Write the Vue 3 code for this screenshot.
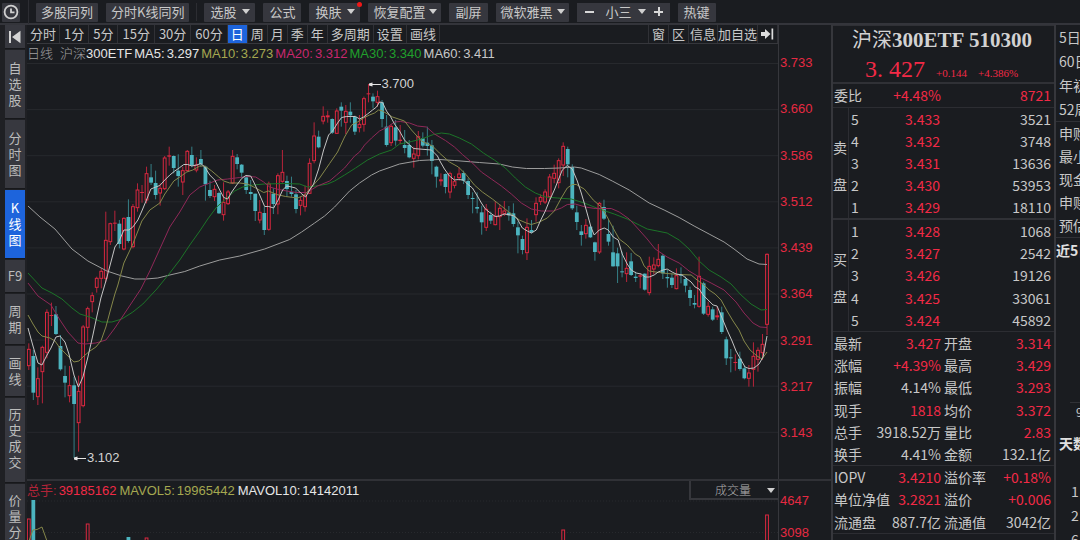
<script setup>
import { ref } from 'vue'

const sideTabs = [
  { text: '自选股', size: 'h3' },
  { text: '分时图', size: 'h3' },
  { text: 'K线图', size: 'h3', active: true },
  { text: 'F9', size: 'h1' },
  { text: '周期', size: 'h2' },
  { text: '画线', size: 'h2' },
  { text: '历史成交', size: 'h4' },
  { text: '价量分布', size: 'h4' },
]

const periods = ['分时', '1分', '5分', '15分', '30分', '60分', '日', '周', '月', '季', '年', '多周期', '设置', '画线']
const isMinute = (t) => /^\d/.test(t)

const averages = [
  { label: 'MA5:', value: '3.297', tone: 'bright' },
  { label: 'MA10:', value: '3.273', tone: 'olive' },
  { label: 'MA20:', value: '3.312', tone: 'pink' },
  { label: 'MA30:', value: '3.340', tone: 'green' },
  { label: 'MA60:', value: '3.411', tone: 'gray' },
]
const volumes = [
  { label: 'MAVOL5:', value: '19965442', tone: 'olive' },
  { label: 'MAVOL10:', value: '14142011', tone: 'bright' },
]
const priceTicks = ['3.733', '3.660', '3.586', '3.512', '3.439', '3.364', '3.291', '3.217', '3.143']
const gridY = priceTicks.map((_, i) => 63.5 + i * 46.1)

// Candles per block: [up, bodyTop, bodyBottom, wickTop, wickBottom] in thirds of a unit below `top`.
const blocks = [
  { top: 280, rows: [
    [1,208,257,190,270],[0,228,338,210,360],[1,296,350,262,375],[1,202,275,197,370],[1,97,217,88,235],[1,105,107,68,138],
    [0,103,162,78,165],[0,198,268,165,272],[0,288,308,257,352],[1,317,347,258,367],[0,316,372,290,534],[1,334,428,287,515],
    [1,141,377,135,382],[1,86,142,80,185],[1,47,65,37,97]] },
  { top: 50, rows: [
    [1,685,712,680,728],[1,664,685,655,715],[1,571,685,485,697],[1,521,575,518,585],[1,518,521,482,543],[0,521,582,510,595],
    [1,505,597,502,601],[0,501,573,448,578],[1,470,590,462,595],[1,420,473,400,485],[1,426,429,405,458],[1,371,450,350,460],
    [0,382,398,342,405],[0,399,435,362,448],[1,415,429,400,467],[1,324,416,318,420],[1,316,320,290,347],[0,318,354,316,370],
    [0,362,378,313,410],[1,362,396,350,435],[1,304,362,300,365]] },
  { top: 70, rows: [
    [0,255,287,230,292],[1,285,300,262,307],[0,267,283,240,290],[0,290,343,287,392],[0,360,378,332,384],[1,358,380,345,393],
    [0,369,430,365,432],[1,397,434,337,452],[1,366,401,360,405],[1,259,339,240,342],[0,262,282,252,298],[0,284,308,282,325],
    [0,322,360,315,372],[0,366,372,330,390],[0,371,423,371,453],[1,427,450,390,460],[0,429,480,410,495],[1,342,478,335,482],
    [0,371,402,355,432],[1,317,402,310,433],[1,307,334,240,338],[0,333,357,317,380],[0,366,372,320,380],[0,373,417,360,430],
    [1,391,406,380,436],[1,376,410,347,425],[1,280,370,265,372],[1,198,272,157,280],[0,200,232,182,235],[1,139,153,109,163],
    [1,136,142,122,158],[0,147,188,145,192],[1,123,190,115,192],[0,110,122,97,170],[1,124,157,105,192],[0,125,136,97,158],
    [0,141,185,137,195],[1,163,173,135,187],[1,86,163,80,185],[1,70,73,42,97],[0,80,94,70,115],[1,80,97,62,110],
    [0,97,147,90,172],[0,170,225,135,230],[1,169,218,163,228],[0,172,212,150,227],[1,209,213,165,222],[0,225,234,180,250],
    [0,225,262,210,265],[1,252,265,230,293],[1,200,257,183,268],[0,205,227,187,232],[0,218,228,170,257],[0,226,273,210,313],
    [0,290,320,287,353],[1,328,334,310,347],[0,312,351,310,370],[1,311,366,305,385],[1,335,346,318,355],[1,312,323,292,332],
    [0,309,332,302,342],[0,333,375,325,387],[0,384,386,367,430],[0,411,416,367,430],[0,427,457,407,494],[1,418,472,402,483],
    [0,435,452,425,462],[1,439,464,393,466],[1,415,440,403,480],[1,423,431,393,438],[0,428,436,408,452],[0,430,462,400,470],
    [0,472,496,455,550],[0,507,540,497,553],[1,472,548,445,570],[0,480,487,450,490],[1,400,434,382,455],[1,382,394,373,405],
    [1,366,396,358,402],[1,321,380,312,390],[1,310,325,284,340],[1,272,338,265,355],[1,229,285,217,318],[0,237,283,230,322],
    [0,291,415,283,420],[0,427,456,407,480]] },
  { top: 130, rows: [
    [0,304,315,285,347],[1,286,311,267,326],[0,290,322,287,324],[0,337,366,335,392],[1,220,366,216,372],[0,231,266,209,270],
    [0,312,335,270,347],[0,367,409,287,410],[0,370,409,353,459],[0,424,426,365,442],[1,415,431,367,456],[0,394,435,369,438],
    [0,440,444,425,456],[1,436,440,430,475],[0,431,479,430,482],[1,409,488,380,496],[1,405,417,382,433],[1,388,407,342,412],
    [0,377,430,372,447],[0,441,445,420,473],[0,443,465,430,474],[1,437,476,415,478],[0,434,436,412,460],[0,447,467,440,487],
    [0,480,504,470,528],[0,519,524,495,535],[1,439,529,380,533],[0,460,551,455,555],[1,529,553,515,560],[0,538,569,530,573],
    [1,556,562,530,570],[0,547,606,530,612],[0,628,685,620,705],[0,682,685,657,727],[1,696,698,673,722],[0,686,717,665,722],
    [0,715,745,707,748],[1,729,745,705,770],[1,679,718,637,770],[1,661,688,652,725],[1,643,668,612,690],[1,373,583,370,615]] },
]
const STEP = 4.535
const candleX = (i) => 28.8 + i * STEP
const candles = blocks
  .flatMap((b) => b.rows.map(([up, ...v]) => [up, ...v.map((n) => b.top + n / 3)]))
  .map(([up, a, b, hi, lo], i) => ({ up, a, b, hi, lo, x: candleX(i) }))

const lines = [
  { tone: 'l60', pts: '28,206 40,217 55,229 72,249 88,261 107,271 122,276 135,279 146,279 158,278 170,275 185,271.5 200,266 220,260 240,256 265,249 290,239.5 302,232 315,223 325,216 335,207 350,191 360,183 372,175 380,171 400,164 420,160.5 440,159.5 455,160.5 480,162.5 500,164 513,167 527,168.5 545,168.5 560,168 575,167 582,168 600,174.5 613,181 630,190 650,203 665,210 680,217.5 695,226 710,234 725,242 735,249 748,259 760,264 768,264.5' },
  { tone: 'l30', pts: '28,273 42,288 52,293 62,299 72,308 80,314 90,317 102,322 112,322 122,319 133,312 143,304 157,289 170,273 180,260 190,245 200,231 208,219 217,207 226,199 235,191 243,187 253,185 265,184 285,183.5 300,184 308,187 316,186 328,184 335,181 345,175 356,168 368,160 380,154 392,150 400,144 412,141.5 422,139 434,134.5 442,133 450,134 460,138 472,144 484,153 495,160 506,168 516,178 526,187 536,193 546,197 558,198 572,199 585,203 600,209 615,214 628,219 640,225 648,229 658,231 668,233 680,240 690,249 700,261 710,270 722,277 732,284 742,295 752,304 762,310 768,309.5' },
  { tone: 'l20', pts: '28,283 38,296 51,305 60,320 68,332 78,343 85,344 96,343 106,340 115,328 125,313 135,298 141,289 150,271 160,249 170,227 180,212 190,195 200,187 210,183 218,180 228,179 240,177.5 247,176.5 256,177 264,182 270,187 277,189 287,191 297,192.5 307,192.5 318,186 330,181 337,175 345,168 355,156 360,152 365,145 372,138 380,131 388,127 395,122 401,121.5 410,123 418,126 427,127 435,134 446,140.5 455,147 463,154.5 473,163 482,172 492,179 502,186 512,194 522,203 532,209 542,211 554,211 562,208 568,204.5 576,204 586,207 596,208.5 612,208.5 620,212 630,219 640,230 648,239 656,249 668,257 680,263 690,271 700,277 712,283 725,290 737,302 745,313 754,323 761,327 768,327.5' },
  { tone: 'l10', pts: '28,315 33,324 38,332 42,336 50,338 55,341 60,348 68,356 74,362 79,361 84,356 90,351 96,347 101,341 106,327 110,312 115,294 118,285 124,263 133,244 142,221 150,210 160,203 165,194 174,181 180,177 187,172 193,170 200,166 205,166 212,171 219,177 224,181 230,183 240,183 248,184 256,188 264,192.5 269,191 277,194.5 286,196.5 298,198 305,195 312,187 320,178 330,163.5 338,152 345,137 352,125 358,122 364,118 370,115 375,113 379,110 383,111 393,117 405,121 412,130 422,141 433,146 440,153 450,162 459,167 467,175 475,185 483,192 493,199 502,206 512,214 520,220 527,223 532,224.5 540,222 548,218 555,211 562,198 568,188 573,184.5 577,184.5 585,189 594,200 602,207 608,217 615,230 620,239 628,245 636,254 641,257 645,266 650,271 660,272.5 668,273.5 680,274.5 692,275 698,280 705,285 710,290 716,294 722,300 728,311 734,321 740,330 745,341 751,350 758,356 763,359 768,352' },
  { tone: 'l5', pts: '28,328 33,346 38,363 42,365 46,357 51,348 56,337 60,336 65,342 69,354 74,375 78.5,387 83,377 88,357 93,335 97,316 101,298 106,281 110,266 115,247 119,241.5 124,230 129,230 133,227 138,220 142,211 147,199 151,189 156,187 160,185.5 165,180 170,175 175,171 180,167.5 184,164.5 188,164.5 192,166 197,165 201,163.5 205,167 210,175 215,180 220,190 224,197.5 228,199 232,192 237,185 242,178.5 246,175.5 251,176 255,184 260,195 265,206.5 269,206.5 274,208 278,201 283,190 287,186 292,187 296,188 301,193 306,197 310,190 314,184 319,169 324,150 329,135 333,131 338,123 342,117.5 347,116.5 356,116.5 360,119 364,117 368,114 373,110 377,107 380,102 383,102.5 387,111 391,116.5 395,124 400,131 405,140 409,144 414,148.5 420,149 432,150 438,156 441,162 445,169 450,176 455,180 459,179.5 464,180 468,184 473,188 478,196 482,203 486,209 491,213 496,216.5 500,216 505,214 511,215 515,216 518,219 523,228 528,231 532,233 537,230 541,221 546,211 550,201 555,190 559,180 563,170 568,165.5 573,169 578,181 582,193 587,210 592,228 595,235 600,230 605,228 609,230 614,237 619,240 623,254 628,264 632,270 637,273 642,274 646,277 650,277 655,275 659,272 664,270 668,269 673,272 677,274 683,275 688,279 692,282 696,287 700,289 704,295 709,300 714,305 718,306 723,318 728,330 733,341 737,351 742,360 746,367 750,368.5 755,368 760,364 764,357 768,336' },
]
const marks = [
  { text: '3.700', x: 369, y: 84 },
  { text: '3.102', x: 74, y: 458 },
]
const markStyle = (m) => ({ left: ((m.x - 27) / 752) * 100 + '%', top: m.y - 62 - 8 + 'px' })

const volumeBars = [
  { i: 0, up: 1, y: 519 }, { i: 1, up: 0, y: 500 }, { i: 13, up: 1, y: 524 }, { i: 22, up: 0, y: 537 },
  { i: 26, up: 1, y: 538 }, { i: 118, up: 1, y: 530 }, { i: 163, up: 1, y: 515 },
].map((b) => ({ ...b, x: candleX(b.i) }))

const books = [
  { side: ['卖', '盘'], cls: 'sell', rows: [['5', '3.433', '3521'], ['4', '3.432', '3748'], ['3', '3.431', '13636'], ['2', '3.430', '53953'], ['1', '3.429', '18110']] },
  { side: ['买', '盘'], cls: 'buy', rows: [['1', '3.428', '1068'], ['2', '3.427', '2542'], ['3', '3.426', '19126'], ['4', '3.425', '33061'], ['5', '3.424', '45892']] },
]
// [label, value, isUp, label, value, isUp]
const stats = [
  ['最新', '3.427', 1, '开盘', '3.314', 1],
  ['涨幅', '+4.39%', 1, '最高', '3.429', 1],
  ['振幅', '4.14%', 0, '最低', '3.293', 1],
  ['现手', '1818', 1, '均价', '3.372', 1],
  ['总手', '3918.52万', 0, '量比', '2.83', 1],
  ['换手', '4.41%', 0, '金额', '132.1亿', 0],
]
const fund = [
  ['IOPV', '3.4210', 1, '溢价率', '+0.18%', 1],
  ['单位净值', '3.2821', 1, '溢价', '+0.006', 1],
  ['流通盘', '887.7亿', 0, '流通值', '3042亿', 0],
]
const spans = ['5日', '60日', '年初', '52周']
const subs = ['申购', '最小', '现金', '申赎', '预估']
const indicator = ref('成交量')
</script>

<template>
  <div class="app">
    <header class="toolbar">
      <button class="tb clock" aria-label="历史">
        <svg width="16" height="16" viewBox="0 0 16 16" fill="none" stroke="#d0d0d0" stroke-width="1.8">
          <circle cx="8" cy="8" r="6.4" /><path d="M8 4.5V8.4H11.5" />
        </svg>
      </button>
      <i class="sep first"></i>
      <button class="tb">多股同列</button>
      <button class="tb">分时K线同列</button>
      <i class="sep"></i>
      <button class="tb drop">选股<i class="caret"></i></button>
      <button class="tb wide">公式</button>
      <button class="tb drop">换肤<i class="caret"></i><i class="dot"></i></button>
      <button class="tb tight">恢复配置<i class="caret"></i></button>
      <button class="tb wide">副屏</button>
      <button class="tb tight">微软雅黑<i class="caret"></i></button>
      <div class="stepper">
        <button class="step" aria-label="缩小"><i class="minus"></i></button>
        <button class="step size">小三<i class="caret"></i></button>
        <button class="step" aria-label="放大"><i class="minus plus"></i></button>
      </div>
      <button class="tb wide">热键</button>
    </header>

    <div class="body">
      <nav class="side">
        <button class="side-btn first" aria-label="收起">
          <svg width="14" height="14" viewBox="0 0 14 14" fill="#d4d4d4"><path d="M1 1h2v12H1zM12.500 .8v12.400L4 7z" /></svg>
        </button>
        <button v-for="t in sideTabs" :key="t.text" class="side-btn" :class="[t.size, { active: t.active }]">
          <span>{{ t.text }}</span>
        </button>
      </nav>

      <main class="chart">
        <section class="price">
          <div class="plot">
            <div class="tabs">
              <button v-for="p in periods" :key="p" class="tab" :class="{ minute: isMinute(p), on: p === '日' }">{{ p }}</button>
              <span class="fill"></span>
              <button class="tab edge">窗</button>
              <button class="tab">区</button>
              <button class="tab snug">信息</button>
              <button class="tab bare">加自选</button>
              <button class="tab" aria-label="展开">
                <svg width="13" height="12" viewBox="0 0 13 12" fill="#dcdcdc"><path d="M0 4h4V1l5.500 5L4 11V8H0zM10.500 .5H12.200v11H10.500z" /></svg>
              </button>
            </div>
            <div class="info">
              <span class="name">日线</span>
              <span class="name stock">沪深</span><span class="bright">300ETF</span>
              <span v-for="m in averages" :key="m.label" class="pair" :class="m.tone"><span>{{ m.label }}</span><span>{{ m.value }}</span></span>
            </div>
            <div class="canvas">
              <svg class="k" viewBox="27 62 752 417" preserveAspectRatio="none">
                <line v-for="y in gridY" :key="y" class="grid" x1="27" x2="779" :y1="y" :y2="y" />
                <g v-for="(c, i) in candles" :key="i" :class="c.up ? 'up' : 'down'">
                  <template v-if="c.up && c.b - c.a > 2">
                    <line class="wick" :x1="c.x" :x2="c.x" :y1="c.hi" :y2="c.a" />
                    <line class="wick" :x1="c.x" :x2="c.x" :y1="c.b" :y2="c.lo" />
                    <rect class="hollow" :x="c.x - 1.4" :y="c.a" width="2.8" :height="c.b - c.a" />
                  </template>
                  <template v-else>
                    <line class="wick" :x1="c.x" :x2="c.x" :y1="c.hi" :y2="c.lo" />
                    <rect class="solid" :x="c.x - 1.900" :y="c.a" width="3.8" :height="Math.max(c.b - c.a, 1)" />
                  </template>
                </g>
                <polyline v-for="l in lines" :key="l.tone" class="ma" :class="l.tone" :points="l.pts" />
              </svg>
              <span v-for="m in marks" :key="m.text" class="mark" :style="markStyle(m)">
                <svg width="12" height="5" viewBox="0 0 12 5"><path d="M0 1.500L3.500 .5V2H12V3H3.500V4.500L0 3.500z" fill="#e4e4e4" /></svg>{{ m.text }}
              </span>
            </div>
          </div>
          <div class="axis">
            <span v-for="t in priceTicks" :key="t">{{ t }}</span>
          </div>
        </section>

        <section class="volume">
          <div class="plot">
            <div class="info vol">
              <span class="pair red"><span class="dim">总手:</span><span>39185162</span></span>
              <span v-for="m in volumes" :key="m.label" class="pair" :class="m.tone"><span>{{ m.label }}</span><span>{{ m.value }}</span></span>
              <label class="pick">
                <select v-model="indicator" aria-label="指标"><option>成交量</option></select>
                <i class="caret small"></i>
              </label>
            </div>
            <svg class="v" viewBox="27 500 752 40" preserveAspectRatio="none">
              <line class="grid dots" x1="27" x2="779" y1="501" y2="501" />
              <line class="grid dots" x1="27" x2="779" y1="532.500" y2="532.500" />
              <g v-for="b in volumeBars" :key="b.i" :class="b.up ? 'up' : 'down'">
                <rect :class="b.up ? 'hollow' : 'solid'" :x="b.x - (b.up ? 1.4 : 1.9)" :y="b.y" :width="b.up ? 2.8 : 3.8" height="60" />
              </g>
              <polyline class="ma l10" points="29,541 33,530 37,529.500 42,527 47,541" />
            </svg>
          </div>
          <div class="axis vaxis"><span>4647</span><span>3098</span></div>
        </section>
      </main>

      <aside class="quote">
        <div class="head">
          <h1><span class="zh">沪深</span>300ETF 510300</h1>
          <div class="last"><strong>3<span class="pt">.</span>427</strong><span>+0.144</span><span>+4.386%</span></div>
        </div>
        <div class="ratio"><span>委比</span><span class="num red">+4.48%</span><span class="num red">8721</span></div>
        <div v-for="b in books" :key="b.cls" class="book" :class="b.cls">
          <div class="who"><span v-for="s in b.side" :key="s">{{ s }}</span></div>
          <table>
            <tbody>
              <tr v-for="r in b.rows" :key="r[0]"><td class="lv">{{ r[0] }}</td><td class="num red pr">{{ r[1] }}</td><td class="num">{{ r[2] }}</td></tr>
            </tbody>
          </table>
        </div>
        <div class="stats six">
          <div v-for="s in stats" :key="s[0]" class="stat">
            <span class="cell"><span>{{ s[0] }}</span><span :class="{ red: s[2] }">{{ s[1] }}</span></span>
            <span class="cell"><span>{{ s[3] }}</span><span :class="{ red: s[5] }">{{ s[4] }}</span></span>
          </div>
        </div>
        <div class="stats three">
          <div v-for="s in fund" :key="s[0]" class="stat">
            <span class="cell"><span>{{ s[0] }}</span><span :class="{ red: s[2] }">{{ s[1] }}</span></span>
            <span class="cell"><span>{{ s[3] }}</span><span :class="{ red: s[5] }">{{ s[4] }}</span></span>
          </div>
        </div>
        <div class="stat tick">
          <span class="cell"><span>14:56:24</span><span class="red">3.427</span></span>
          <span class="cell"><span class="red deal">410014</span><span>170</span></span>
        </div>
      </aside>

      <aside class="extra">
        <ul class="spans"><li v-for="s in spans" :key="s">{{ s }}</li></ul>
        <ul class="subs"><li v-for="s in subs" :key="s">{{ s }}</li></ul>
        <h2>近5日</h2>
        <div class="scale">9</div>
        <h2 class="days">天数</h2>
        <ul class="nums"><li>1</li><li>2</li><li>6</li></ul>
      </aside>
    </div>
  </div>
</template>

<style>
body { margin: 0; background: #1a1c20; }
</style>

<style scoped>
.app {
  height: 100vh;
  overflow: hidden;
  display: flex;
  flex-direction: column;
  background: #1a1c20;
  color: #c8c8c8;
  font: 13px/18px "Noto Sans CJK SC", sans-serif;
}
* { box-sizing: border-box; }
button {
  font: inherit;
  color: inherit;
  background: none;
  border: 0;
  padding: 0;
  margin: 0;
  white-space: nowrap;
}
svg { display: block; }
.red { color: #f22a46; }
.bright { color: #e6e6e6; }
.gray { color: #c8c8c8; }
.olive { color: #a5a850; }
.pink { color: #c8286e; }
.green { color: #20a02c; }

.toolbar {
  flex: none;
  height: 25px;
  display: flex;
  align-items: center;
  gap: 8px;
  padding: 1px 2px 0 2px;
  border-bottom: 2px solid #34353b;
}
.tb {
  position: relative;
  height: 19px;
  padding: 0 5px 1px;
  background: #36373e;
  border-radius: 1px;
  display: flex;
  align-items: center;
}
.clock { padding: 0 1px; }
.wide { padding: 0 6px 1px; }
.drop { padding: 0 5px 1px 6px; gap: 6px; }
.tight { gap: 4px; padding: 0 4px 1px 5px; }
.sep { width: 1px; height: 18px; background: #2c2d32; margin: 0 -1px; }
.sep.first { margin: 0 -1px 0 0; }
.caret {
  border: 4px solid transparent;
  border-top: 5px solid #d0d0d0;
  border-bottom: 0;
}
.dot {
  position: absolute;
  top: -1px;
  right: -2px;
  width: 5px;
  height: 5px;
  border-radius: 50%;
  background: #f01818;
}
.stepper {
  display: flex;
  align-items: center;
  gap: 12px;
  height: 19px;
  padding: 0 7px 1px 8px;
  background: #36373e;
}
.step { display: flex; align-items: center; gap: 6px; }
.step.size { margin-right: -4px; }
.minus { position: relative; width: 9px; height: 2px; background: #d8d8d8; }
.plus::after {
  content: "";
  position: absolute;
  left: 4px;
  top: -4px;
  width: 2px;
  height: 9px;
  background: #d8d8d8;
}

.body { flex: 1; min-height: 0; display: flex; }
.side {
  flex: none;
  width: 27px;
  padding: 0 2px 0 5px;
  display: flex;
  flex-direction: column;
  gap: 1px;
  background: #1f2024;
}
.side-btn {
  flex: none;
  display: flex;
  align-items: center;
  justify-content: center;
  background: #37383f;
  border-bottom: 1px solid #17181b;
  line-height: 16px;
  color: #bcbcbc;
}
.side-btn span { width: 13px; white-space: normal; word-break: break-all; }
.first { height: 24px; }
.h1 { height: 33px; }
.h1 span { width: auto; }
.h2 { height: 51px; }
.h3 { height: 69px; }
.h4 { height: 85px; padding-bottom: 4px; }
.active { background: #1d64dc; color: #fff; }

.chart { flex: 1; min-width: 0; display: flex; flex-direction: column; }
.price, .volume { display: flex; }
.price { border-bottom: 2px solid #303136; }
.plot { flex: 1; min-width: 0; border-right: 1px solid #36373c; }
.tabs { display: flex; height: 19px; border-bottom: 1px solid #36373c; }
.tab { padding: 0 3px; border-right: 1px solid #303136; height: 18px; display: flex; align-items: center; }
.tab.minute { padding: 0 4px; }
.tab.snug { padding: 0 1px; }
.tab.bare { padding: 0; }
.tab.edge { border-left: 1px solid #303136; }
.tab.on { background: #1d64dc; color: #fff; }
.fill { flex: 1; }
.info {
  display: flex;
  gap: 2px;
  height: 18px;
  font: 13px/19px "Liberation Sans", "Noto Sans CJK SC", sans-serif;
  white-space: nowrap;
}
.name { color: #a0a0a0; font-weight: 300; }
.stock { margin: 0 -2px 0 5px; }
.pair { display: flex; gap: 2px; }
.canvas { position: relative; }
.k { width: 100%; height: 417px; }
.v { width: 100%; height: 40px; }
.grid { stroke: #27292d; stroke-width: 1; vector-effect: non-scaling-stroke; }
.dots { stroke-dasharray: 1 2; }
.wick { stroke-width: 1; }
.up .wick { stroke: #b8243a; }
.down .wick { stroke: #358087; }
.up .hollow { fill: #1a1c20; stroke: #dc2840; stroke-width: 1; }
.up .solid { fill: #dc2840; }
.down .solid { fill: #4cb4bf; }
.ma { fill: none; stroke-width: 1; vector-effect: non-scaling-stroke; }
.l5 { stroke: #c4c4c4; }
.l10 { stroke: #85874a; }
.l20 { stroke: #8f2858; }
.l30 { stroke: #1c7428; }
.l60 { stroke: #9c9c9c; }
.mark {
  position: absolute;
  display: flex;
  align-items: center;
  gap: 1px;
  font: 13px/16px "Liberation Sans", sans-serif;
  color: #d4d4d4;
}
.axis {
  flex: none;
  width: 52px;
  height: 386px;
  margin-top: 30px;
  padding-left: 1px;
  display: flex;
  flex-direction: column;
  justify-content: space-between;
  font: 13px/16px "Liberation Sans", sans-serif;
  color: #e62a42;
}
.vaxis { height: 48px; margin-top: 12px; }
.info.vol { height: 19px; }
.dim { color: #b02438; }
.vol .pair + .pair { margin-left: 1px; }
.pick {
  position: relative;
  margin-left: auto;
  width: 89px;
  height: 19px;
  border: solid #36373c;
  border-width: 0 0 2px 2px;
}
.pick select {
  appearance: none;
  width: 100%;
  height: 17px;
  padding: 0 0 0 24px;
  border: 0;
  background: #1a1c20;
  color: #b0b0b0;
  font: 300 12px/17px "Noto Sans CJK SC", sans-serif;
}
.caret.small { position: absolute; right: 3px; top: 7px; }

.quote {
  flex: none;
  width: 225px;
  border: solid #36373c;
  border-width: 0 2px;
  font-size: 14px;
  line-height: 20px;
}
.head { height: 59px; border-bottom: 2px solid #303136; border-top: 1px solid #303136; text-align: center; }
h1 { margin: 0; padding-right: 3px; font: bold 21px/28px "Liberation Serif", "Noto Sans CJK SC", serif; color: #d2d2d2; }
.zh { font-size: 20px; font-weight: 400; }
.last {
  display: flex;
  align-items: baseline;
  padding-left: 32px;
  gap: 11px;
  font: 11px/30px "Liberation Serif", serif;
  color: #f22a46;
}
.last strong { font-weight: 400; font-size: 24px; }
.pt { display: inline-block; width: 12px; text-align: left; }
.ratio {
  height: 24px;
  display: grid;
  grid-template-columns: 30px 77px 1fr;
  align-items: center;
  padding: 0 3px 1px 1px;
  border-bottom: 1px solid #2c2d32;
  white-space: nowrap;
}
.num { text-align: right; }
.book { display: flex; }
.sell { height: 112px; border-bottom: 2px solid #303136; }
.buy { height: 112px; border-bottom: 1px solid #2c2d32; }
.who {
  width: 16px;
  padding: 20px 0 16px 0;
  border-right: 1px solid #2c2d32;
  display: flex;
  flex-direction: column;
  justify-content: space-around;
}
table { flex: 1; height: 100%; border-collapse: collapse; table-layout: fixed; }
td { padding: 0; line-height: 20px; }
td:last-child { padding-right: 3px; }
.lv { width: 20px; padding-left: 2px; }
.pr { width: 71px; }
.stats { display: grid; grid-auto-rows: 1fr; border-bottom: 1px solid #2c2d32; }
.six { height: 134px; }
.three { height: 68px; }
.stat {
  display: grid;
  grid-template-columns: 107px 1fr;
  column-gap: 3px;
  align-items: center;
  padding: 0 3px 0 1px;
  white-space: nowrap;
}
.cell { display: flex; justify-content: space-between; }
.tick { height: 20px; }
.deal { margin-left: 19px; }

.extra { flex: none; width: 24px; overflow: hidden; white-space: nowrap; font-size: 14px; }
ul { list-style: none; margin: 0; padding: 0 0 0 3px; }
.spans { border-bottom: 1px solid #303136; }
.spans li { line-height: 24px; }
.subs { padding-bottom: 0; border-bottom: 1px solid #303136; }
.subs li { line-height: 23px; }
h2 { margin: 0; font-size: 14px; line-height: 24px; color: #e0e0e0; }
.scale { margin: 140px 0 0 14px; padding-left: 6px; border-top: 1px solid #303136; font-size: 12px; }
.days { margin: 10px 0 0 3px; }
.nums { padding: 24px 0 0 15px; }
.nums li { line-height: 24px; }
</style>
